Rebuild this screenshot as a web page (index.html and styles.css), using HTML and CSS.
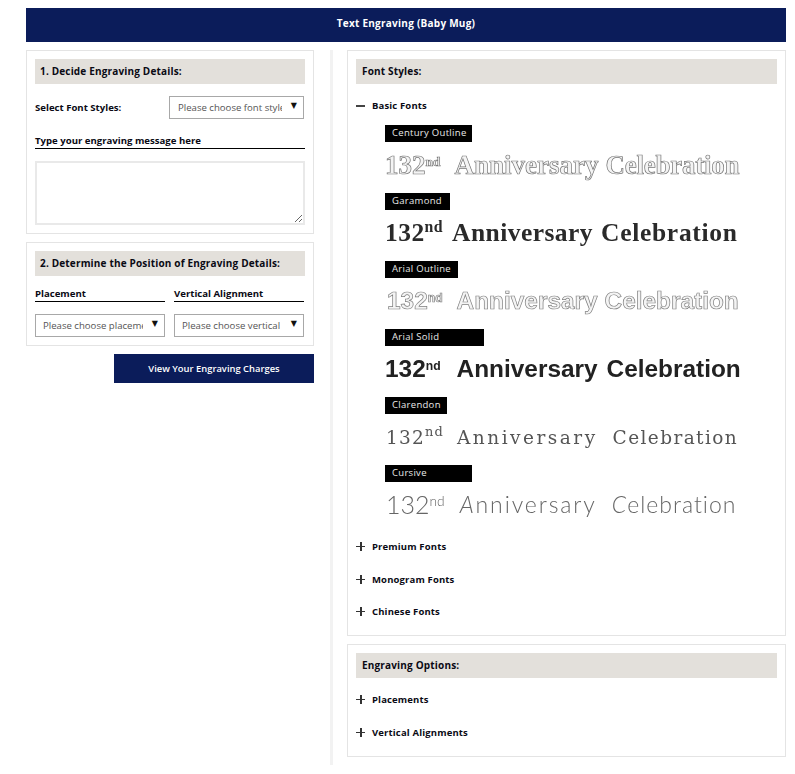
FILE: index.html
```html
<!DOCTYPE html>
<html lang="en">
<head>
<meta charset="utf-8">
<title>Text Engraving (Baby Mug)</title>
<link rel="stylesheet" href="styles.css">
</head>
<body>
<div class="page">
  <header class="banner">Text Engraving (Baby Mug)</header>
  <div class="columns">
    <div class="left">
      <section class="panel panel-details">
        <h2 class="title">1. Decide Engraving Details:</h2>
        <div class="font-row">
          <label class="strong">Select Font Styles:</label>
          <div class="pick pick-font"><select><option>Please choose font style</option></select></div>
        </div>
        <div class="rule-label msg-label">Type your engraving message here</div>
        <textarea class="message"></textarea>
      </section>
      <section class="panel panel-position">
        <h2 class="title">2. Determine the Position of Engraving Details:</h2>
        <div class="pos-grid">
          <div class="rule-label">Placement</div>
          <div class="rule-label">Vertical Alignment</div>
          <div class="pick"><select><option>Please choose placement</option></select></div>
          <div class="pick"><select><option>Please choose vertical alignment</option></select></div>
        </div>
      </section>
      <div class="actions"><button class="charges" type="button">View Your Engraving Charges</button></div>
    </div>
    <div class="divider"></div>
    <div class="right">
      <section class="panel panel-fonts">
        <h2 class="title">Font Styles:</h2>
        <div class="acc acc-open"><span class="icon minus"></span>Basic Fonts</div>
        <div class="samples">
          <div class="tag w87">Century Outline</div>
          <div class="sample s-century"><span>132<sup>nd</sup></span><span>Anniversary</span><span>Celebration</span></div>
          <div class="tag w65">Garamond</div>
          <div class="sample s-garamond"><span>132<sup>nd</sup></span><span>Anniversary</span><span>Celebration</span></div>
          <div class="tag w73">Arial Outline</div>
          <div class="sample s-arial-o"><span>132<sup>nd</sup></span><span>Anniversary</span><span>Celebration</span></div>
          <div class="tag w99">Arial Solid</div>
          <div class="sample s-arial"><span>132<sup>nd</sup></span><span>Anniversary</span><span>Celebration</span></div>
          <div class="tag w62">Clarendon</div>
          <div class="sample s-clarendon"><span>132<sup>nd</sup></span><span>Anniversary</span><span>Celebration</span></div>
          <div class="tag w87">Cursive</div>
          <div class="sample s-cursive"><span>132<sup>nd</sup></span><span><i>A</i>nniversary</span><span><i>C</i>elebration</span></div>
        </div>
        <div class="acc acc-first"><span class="icon plus"></span>Premium Fonts</div>
        <div class="acc"><span class="icon plus"></span>Monogram Fonts</div>
        <div class="acc acc-last"><span class="icon plus"></span>Chinese Fonts</div>
      </section>
      <section class="panel panel-options">
        <h2 class="title">Engraving Options:</h2>
        <div class="acc acc-option"><span class="icon plus"></span>Placements</div>
        <div class="acc"><span class="icon plus"></span>Vertical Alignments</div>
      </section>
    </div>
  </div>
</div>
</body>
</html>
```
FILE: styles.css
```css
* { box-sizing: border-box; }
html, body { margin: 0; background: #fff; }
body { font-family: "Open Sans", "Liberation Sans", sans-serif; font-size: 9.6px; color: #0a0a14; }
.page { width: 760px; margin: 8px 0 0 26px; }
.banner { height: 34px; background: #0b1c5a; color: #fff; font-weight: 700; font-size: 10px; letter-spacing: 0.25px; line-height: 30px; text-align: center; }
.columns { display: flex; margin-top: 8px; height: 715px; }
.left { width: 288px; flex: none; display: flex; flex-direction: column; gap: 8px; }
.divider { width: 3px; flex: none; margin-left: 16px; background: #f2f2f2; }
.right { width: 439px; flex: none; margin-left: 14px; display: flex; flex-direction: column; gap: 8px; }
.panel { border: 1px solid #e4e4e4; padding: 8px; }
.panel-details { height: 184px; }
.panel-position { height: 104px; }
.panel-fonts { height: 586px; }
.panel-options { height: 113px; }
.title { margin: 0; height: 25px; background: #e3e0db; padding-left: 5px; font-size: 10px; font-weight: 700; line-height: 25px; letter-spacing: 0.17px; color: #0a0a14; }
.panel-fonts .title, .panel-options .title { padding-left: 6px; }
.strong { font-weight: 700; }
.font-row { display: flex; justify-content: space-between; align-items: center; margin-top: 12px; padding-right: 1px; }
.pick { position: relative; height: 23px; }
.pick-font { width: 135px; }
.pick::after { content: "▼"; position: absolute; right: 7px; top: 4px; font-size: 8px; line-height: 12px; color: #111; pointer-events: none; font-family: "DejaVu Sans", sans-serif; }
.pick select { appearance: none; -webkit-appearance: none; width: 100%; height: 100%; border: 1px solid #a8a8a8; border-radius: 0; background: #fff; padding: 0 21px 0 8px; font-family: "Open Sans", sans-serif; font-size: 9.6px; color: #555; }
.pos-grid .pick select { padding-left: 7px; }
.rule-label { font-weight: 700; border-bottom: 1px solid #000; height: 15px; line-height: 13px; }
.msg-label { margin-top: 15px; }
.message { display: block; width: 270px; height: 64px; margin-top: 12px; border: 2px solid #e9e9e9; background: #fff; padding: 2px; outline: none; }
.pos-grid { display: grid; grid-template-columns: 130px 130px; column-gap: 9px; row-gap: 12px; margin-top: 11px; }
.actions { display: flex; justify-content: flex-end; }
.charges { width: 200px; height: 29px; border: 0; background: #0b1c5a; color: #fff; font-family: "Open Sans", sans-serif; font-size: 9.4px; font-weight: 600; padding: 0; }
.acc { display: flex; align-items: center; height: 14px; font-weight: 700; font-size: 9.5px; letter-spacing: 0.15px; margin-top: 19px; }
.acc-open { margin-top: 14px; }
.acc-first { margin-top: 6px; }
.acc-last { margin-top: 18px; }
.acc-option { margin-top: 14px; }
.icon { position: relative; width: 9px; height: 9px; margin-right: 7px; flex: none; }
.icon::before { content: ""; position: absolute; left: 0; right: 0; top: 4px; height: 1.5px; background: #333; }
.minus::before { height: 2px; background: #444; }
.plus::after { content: ""; position: absolute; top: 0; bottom: 0; left: 4px; width: 1.5px; background: #333; }
.samples { padding-left: 29px; margin-top: 13px; }
.tag { height: 17px; background: #000; color: #e8e8e8; padding-left: 7px; font-size: 9.5px; line-height: 15px; letter-spacing: 0.3px; }
.w87 { width: 87px; }
.w65 { width: 65px; }
.w73 { width: 73px; }
.w99 { width: 99px; }
.w62 { width: 62px; }
.sample { display: flex; height: 51px; align-items: center; white-space: nowrap; color: #2a2a2a; font-size: 25px; line-height: 34px; padding-bottom: 5px; gap: 14px; will-change: transform; }
.sample span { display: block; }
.sample span:last-child { margin-left: -6px; }
.sample sup { font-size: 50%; line-height: 0; vertical-align: 0.6em; }
.s-century { font-family: "Liberation Serif", serif; font-weight: 700; color: #f4f4f4; -webkit-text-stroke: 0.7px #777; font-size: 27px; }
.s-century span:last-child { margin-left: -7px; letter-spacing: -0.25px; }
.s-garamond { font-family: "Liberation Serif", serif; font-weight: 700; color: #2a2a2a; font-size: 25.5px; letter-spacing: 0.45px; gap: 9px; }
.s-garamond sup { font-size: 62%; }
.s-garamond span:last-child { margin-left: -1px; letter-spacing: 0.7px; }
.s-arial-o { font-family: "Liberation Sans", sans-serif; font-weight: 700; color: #f4f4f4; -webkit-text-stroke: 0.7px #808080; font-size: 24.4px; padding-left: 2px; }
.s-arial { font-family: "Liberation Sans", sans-serif; font-weight: 700; font-size: 24.4px; color: #222; gap: 16px; }
.s-arial-o span:last-child, .s-arial span:last-child { margin-left: -7px; }
.s-clarendon { font-family: "DejaVu Serif", serif; color: #555; font-size: 18.5px; letter-spacing: 1.2px; padding: 0 0 3px 1px; gap: 13px; }
.s-clarendon span:nth-child(2) { letter-spacing: 2.5px; }
.s-clarendon sup { font-size: 70%; }
.s-clarendon span:last-child { margin-left: 2px; letter-spacing: 1.4px; }
.s-cursive { font-family: "Lato", sans-serif; font-weight: 300; color: #666; font-size: 23px; letter-spacing: 1.9px; padding: 0 0 7px 1px; gap: 15px; }
.s-cursive span:first-child { font-size: 25px; letter-spacing: 0; }
.s-cursive sup { font-size: 55%; }
.s-cursive span:last-child { margin-left: 0; letter-spacing: 1px; }
```
